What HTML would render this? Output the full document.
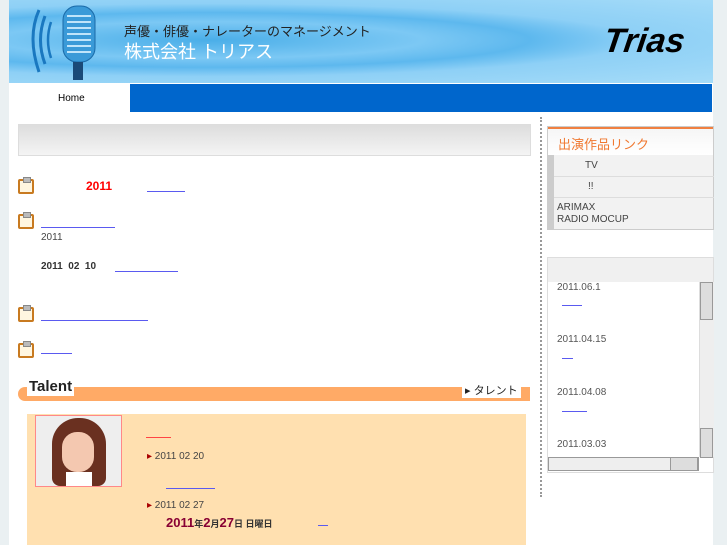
<!DOCTYPE html>
<html><head><meta charset="utf-8"><style>
*{margin:0;padding:0;box-sizing:border-box}
body{width:727px;height:545px;overflow:hidden;background:#eaf0f2;font-family:"Liberation Sans","Noto Sans CJK JP",sans-serif;position:relative}
.a{position:absolute}
.u{position:absolute;height:1px;background:#5a5af0}
.icon{position:absolute;width:16px;height:15px;border:2px solid #c87a20;background:#fff6e0;border-radius:2px}
.icon:after{content:"";position:absolute;left:3px;top:-4px;width:6px;height:4px;background:#bbb;border:1px solid #888}
.t{font-size:10px;color:#444}
</style></head><body>
<div class="a" style="left:9px;top:0;width:704px;height:545px;background:#fff"></div>
<div class="a" style="left:9px;top:0;width:704px;height:83px;background:radial-gradient(ellipse at 200px 40px,#4aaee8 0,#7cc8f4 30%,#5db8ee 45%,#8ed0f6 60%,#a6dcf8 100%)"></div>
<svg class="a" style="left:25px;top:2px" width="80" height="80">
<path d="M14 8 Q2 35 14 70" stroke="#1a78c0" stroke-width="3" fill="none"/>
<path d="M20 14 Q11 38 20 62" stroke="#1a78c0" stroke-width="3" fill="none"/>
<path d="M26 20 Q20 38 26 56" stroke="#1a78c0" stroke-width="2.5" fill="none"/>
<rect x="38" y="4" width="32" height="56" rx="14" fill="#3a9ad8" stroke="#1a6aa8"/>
<path d="M42 14h24M42 20h24M42 26h24M42 32h24M42 38h24M42 44h24M42 50h24" stroke="#bfe4fa" stroke-width="2"/>
<rect x="48" y="60" width="10" height="18" fill="#1a4a78"/>
</svg>
<div class="a" style="left:124px;top:21px;font-size:13px;color:#222">声優・俳優・ナレーターのマネージメント</div>
<div class="a" style="left:124px;top:38px;font-size:18px;color:#fff">株式会社 トリアス</div>
<div class="a" style="left:604px;top:22px;font-size:34px;font-weight:bold;font-style:italic;color:#000;transform:skewX(-8deg)">Trias</div>
<div class="a" style="left:130px;top:84px;width:582px;height:28px;background:#0066cc"></div>
<div class="a" style="left:58px;top:93px;font-size:10px;color:#000">Home</div>
<div class="a" style="left:18px;top:124px;width:513px;height:32px;background:linear-gradient(#ddd,#f4f4f4);border:1px solid #ddd"></div>
<div class="icon" style="left:18px;top:179px"></div>
<div class="a" style="left:86px;top:179px;font-size:12px;font-weight:bold;color:#f00">2011</div>
<div class="u" style="left:147px;top:191px;width:38px"></div>
<div class="icon" style="left:18px;top:214px"></div>
<div class="u" style="left:41px;top:227px;width:74px"></div>
<div class="a t" style="left:41px;top:232px">2011</div>
<div class="a t" style="left:41px;top:261px;font-weight:bold;color:#333">2011&nbsp; 02&nbsp; 10</div>
<div class="u" style="left:115px;top:271px;width:63px"></div>
<div class="icon" style="left:18px;top:307px"></div>
<div class="u" style="left:41px;top:320px;width:107px"></div>
<div class="icon" style="left:18px;top:343px"></div>
<div class="u" style="left:41px;top:353px;width:31px"></div>
<div class="a" style="left:18px;top:387px;width:512px;height:14px;background:#ffaa66;border-radius:7px 0 0 7px"></div>
<div class="a" style="left:27px;top:378px;font-size:15px;font-weight:bold;color:#222;background:#fff;padding:0 2px;line-height:18px">Talent</div>
<div class="a" style="left:462px;top:382px;font-size:11px;color:#222;background:#fff;padding:0 3px">▸ タレント</div>
<div class="a" style="left:27px;top:414px;width:499px;height:131px;background:#ffe0b0"></div>
<div class="a" style="left:35px;top:415px;width:87px;height:72px;border:1px solid #f88;background:#eee"></div>
<div class="a" style="left:52px;top:418px;width:54px;height:68px;background:#6a3020;border-radius:26px 26px 8px 8px"></div>
<div class="a" style="left:62px;top:432px;width:32px;height:40px;background:#f4c8b0;border-radius:15px"></div>
<div class="a" style="left:66px;top:472px;width:26px;height:14px;background:#fff"></div>
<div class="a" style="left:146px;top:437px;width:25px;height:1px;background:#f44"></div>
<div class="a t" style="left:147px;top:451px"><span style="color:#a00">▸</span> 2011 02 20</div>
<div class="u" style="left:166px;top:488px;width:49px"></div>
<div class="a t" style="left:147px;top:500px"><span style="color:#a00">▸</span> 2011 02 27</div>
<div class="a" style="left:166px;top:515px;font-size:13px;font-weight:bold;color:#803;">2011<span style="font-size:9px;color:#333">年</span>2<span style="font-size:9px;color:#333">月</span>27<span style="font-size:9px;color:#333">日 日曜日</span></div>
<div class="u" style="left:318px;top:525px;width:10px"></div>
<div class="a" style="left:540px;top:117px;width:0;height:380px;border-left:2px dotted #999"></div>
<div class="a" style="left:547px;top:126px;width:167px;height:104px;border:1px solid #ccc;background:#f2f2f2"></div>
<div class="a" style="left:548px;top:127px;width:165px;height:28px;background:linear-gradient(#f6f6f6,#fff);border-top:2px solid #f08040"></div>
<div class="a" style="left:558px;top:134px;font-size:13px;color:#f07830">出演作品リンク</div>
<div class="a" style="left:548px;top:155px;width:6px;height:74px;background:#ccc"></div>
<div class="a" style="left:554px;top:176px;width:160px;height:1px;background:#ddd"></div>
<div class="a" style="left:554px;top:197px;width:160px;height:1px;background:#ddd"></div>
<div class="a t" style="left:585px;top:160px">TV</div>
<div class="a t" style="left:588px;top:181px">!!</div>
<div class="a t" style="left:557px;top:202px;line-height:12px">ARIMAX<br>RADIO MOCUP</div>
<div class="a" style="left:547px;top:257px;width:167px;height:216px;border:1px solid #ddd;background:#fff"></div>
<div class="a" style="left:548px;top:258px;width:165px;height:24px;background:#f0f0f0"></div>
<div class="a" style="left:699px;top:282px;width:15px;height:175px;background:#eee;border-left:1px solid #ddd"></div>
<div class="a" style="left:700px;top:282px;width:13px;height:38px;border:1px solid #999;background:#ddd"></div>
<div class="a" style="left:700px;top:428px;width:13px;height:30px;border:1px solid #999;background:#ddd"></div>
<div class="a" style="left:548px;top:457px;width:151px;height:14px;background:#eee;border:1px solid #999"></div>
<div class="a" style="left:670px;top:457px;width:28px;height:14px;border:1px solid #999;background:#ddd"></div>
<div class="a t" style="left:557px;top:282px;color:#555">2011.06.1</div>
<div class="u" style="left:562px;top:305px;width:20px"></div>
<div class="a t" style="left:557px;top:334px;color:#555">2011.04.15</div>
<div class="u" style="left:562px;top:358px;width:11px"></div>
<div class="a t" style="left:557px;top:387px;color:#555">2011.04.08</div>
<div class="u" style="left:562px;top:411px;width:25px"></div>
<div class="a t" style="left:557px;top:439px;color:#555">2011.03.03</div>
</body></html>
